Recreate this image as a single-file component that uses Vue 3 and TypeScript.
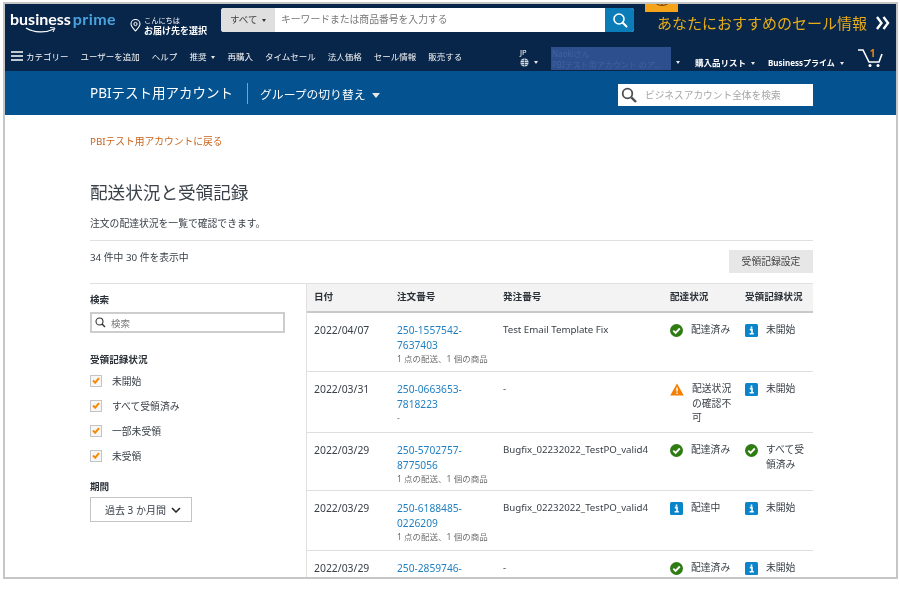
<script setup lang="ts">
interface Status {
  icon: 'ok' | 'info' | 'warn'
  text: string
}
interface Row {
  date: string
  order: string
  note: string
  po: string
  delivery: Status
  receipt: Status
  height: number
}

const navLinks = ['ユーザーを追加', 'ヘルプ', '推奨', '再購入', 'タイムセール', '法人価格', 'セール情報', '販売する']
const filters = ['未開始', 'すべて受領済み', '一部未受領', '未受領']
const noteText = '1 点の配送、1 個の商品'

const rows: Row[] = [
  { date: '2022/04/07', order: '250-1557542-7637403', note: noteText, po: 'Test Email Template Fix', delivery: { icon: 'ok', text: '配達済み' }, receipt: { icon: 'info', text: '未開始' }, height: 59 },
  { date: '2022/03/31', order: '250-0663653-7818223', note: '-', po: '-', delivery: { icon: 'warn', text: '配送状況の確認不可' }, receipt: { icon: 'info', text: '未開始' }, height: 61 },
  { date: '2022/03/29', order: '250-5702757-8775056', note: noteText, po: 'Bugfix_02232022_TestPO_valid4', delivery: { icon: 'ok', text: '配達済み' }, receipt: { icon: 'ok', text: 'すべて受領済み' }, height: 58 },
  { date: '2022/03/29', order: '250-6188485-0226209', note: noteText, po: 'Bugfix_02232022_TestPO_valid4', delivery: { icon: 'info', text: '配達中' }, receipt: { icon: 'info', text: '未開始' }, height: 60 },
  { date: '2022/03/29', order: '250-2859746-1102938', note: noteText, po: '-', delivery: { icon: 'ok', text: '配達済み' }, receipt: { icon: 'info', text: '未開始' }, height: 59 },
]
</script>

<template>
  <div class="frame">
    <header class="topbar">
      <div class="row-one">
        <div class="logo">
          <span class="logo-word"><b>business</b><i>prime</i></span>
          <svg class="logo-smile" width="32" height="7" viewBox="0 0 32 7">
            <path d="M1 1c8 5 20 5 28 1" fill="none" stroke="#fff" stroke-width="1.2" />
            <path d="M25 .5l5 .5-2 4" fill="none" stroke="#fff" stroke-width="1" />
          </svg>
        </div>
        <div class="deliver">
          <svg width="11" height="13" viewBox="0 0 11 13">
            <path d="M5.5 12C3 9 1 7.300 1 5a4.500 4.500 0 0 1 9 0c0 2.300-2 4-4.500 7z" fill="none" stroke="#fff" stroke-width="1.100" />
            <circle cx="5.500" cy="5" r="1.600" fill="none" stroke="#fff" />
          </svg>
          <div>
            <small>こんにちは</small>
            <strong>お届け先を選択</strong>
          </div>
        </div>
        <div class="search">
          <span class="search-cat">すべて <em class="caret dark"></em></span>
          <span class="search-input">キーワードまたは商品番号を入力する</span>
          <span class="search-btn">
            <svg width="16" height="16" viewBox="0 0 16 16">
              <circle cx="7" cy="7" r="5" fill="none" stroke="#fff" stroke-width="1.600" />
              <path d="M10.800 10.800L14.500 14.500" stroke="#fff" stroke-width="2" stroke-linecap="round" />
            </svg>
          </span>
        </div>
        <div class="promo">
          <span class="promo-tab">
            <svg width="14" height="6" viewBox="0 0 14 6">
              <path d="M1 1.500c3 2.500 9 2.500 12 0M7 0v3" fill="none" stroke="#5c3a00" stroke-width="1" />
            </svg>
          </span>
          <span class="promo-text">あなたにおすすめのセール情報</span>
          <svg class="promo-arrows" width="14" height="14" viewBox="0 0 14 14">
            <path d="M1 1l4.500 6L1 13M7.500 1L12 7l-4.500 6" fill="none" stroke="#fff" stroke-width="2.400" />
          </svg>
        </div>
      </div>
      <div class="row-two">
        <nav class="nav-left">
          <span class="cat">
            <svg width="12" height="10" viewBox="0 0 12 10">
              <path d="M0 1h12M0 5h12M0 9h12" stroke="#fff" stroke-width="1.400" />
            </svg>
            カテゴリー
          </span>
          <span v-for="link in navLinks" :key="link" class="nav-link">
            {{ link }}<em v-if="link === '推奨'" class="caret"></em>
          </span>
        </nav>
        <div class="nav-right">
          <div class="lang">
            <span>JP</span>
            <span class="globe">
              <svg width="9" height="9" viewBox="0 0 9 9">
                <circle cx="4.500" cy="4.500" r="4" fill="#d8dde4" />
                <path d="M.5 4.500h8M4.500.5v8M1.300 2.400h6.400M1.300 6.600h6.400" stroke="#08264a" stroke-width=".6" />
              </svg>
              <em class="caret"></em>
            </span>
          </div>
          <div class="account">
            <span>Naokiさん</span>
            <span>PBIテスト用アカウント のア…</span>
          </div>
          <em class="caret account-caret"></em>
          <span class="nav-strong list">購入品リスト<em class="caret"></em></span>
          <span class="nav-strong biz">Businessプライム<em class="caret"></em></span>
          <span class="cart">
            <i>1</i>
            <svg width="26" height="20" viewBox="0 0 26 20">
              <path d="M1 2h5l6 12h10l3-8" fill="none" stroke="#fff" stroke-width="1.600" />
              <circle cx="13" cy="17.500" r="1.500" fill="#fff" />
              <circle cx="21" cy="17.500" r="1.500" fill="#fff" />
            </svg>
          </span>
        </div>
      </div>
    </header>

    <section class="account-bar">
      <div class="account-left">
        <span class="account-name">PBIテスト用アカウント</span>
        <span class="account-switch">グループの切り替え<em class="caret large"></em></span>
      </div>
      <div class="account-search">
        <svg width="16" height="16" viewBox="0 0 16 16">
          <circle cx="6.500" cy="6.500" r="4.800" fill="none" stroke="#4a4f55" stroke-width="1.800" />
          <path d="M10.300 10.300L15 15" stroke="#4a4f55" stroke-width="2.400" />
        </svg>
        <span>ビジネスアカウント全体を検索</span>
      </div>
    </section>

    <main class="content">
      <a class="back">PBIテスト用アカウントに戻る</a>
      <h1>配送状況と受領記録</h1>
      <p class="desc">注文の配達状況を一覧で確認できます。</p>
      <div class="count-bar">
        <span>34 件中 30 件を表示中</span>
        <button class="settings">受領記録設定</button>
      </div>

      <div class="columns">
        <aside class="side">
          <h3>検索</h3>
          <div class="side-search">
            <svg width="11" height="11" viewBox="0 0 11 11">
              <circle cx="4.500" cy="4.500" r="3.500" fill="none" stroke="#333" stroke-width="1.100" />
              <path d="M7 7l3 3" stroke="#333" stroke-width="1.400" />
            </svg>
            <span>検索</span>
          </div>
          <h3 class="status-title">受領記録状況</h3>
          <label v-for="f in filters" :key="f" class="check">
            <span class="box">
              <svg width="8" height="7" viewBox="0 0 8 7">
                <path d="M1 3.500l2.200 2.200L7 1.200" fill="none" stroke="#f58a00" stroke-width="2" />
              </svg>
            </span>
            {{ f }}
          </label>
          <h3 class="period-title">期間</h3>
          <div class="period">
            <span>過去 3 か月間</span>
            <svg width="10" height="6" viewBox="0 0 10 6">
              <path d="M1 1l4 4 4-4" fill="none" stroke="#222" stroke-width="1.500" />
            </svg>
          </div>
        </aside>

        <div class="table">
          <div class="tr head">
            <span>日付</span>
            <span>注文番号</span>
            <span>発注番号</span>
            <span>配達状況</span>
            <span>受領記録状況</span>
          </div>
          <div v-for="row in rows" :key="row.order" class="tr" :style="{ height: row.height + 'px' }">
            <span class="date">{{ row.date }}</span>
            <div class="order">
              <a>{{ row.order }}</a>
              <small>{{ row.note }}</small>
            </div>
            <span class="po">{{ row.po }}</span>
            <div v-for="s in [row.delivery, row.receipt]" :key="s.text" class="status">
              <svg v-if="s.icon === 'ok'" width="13" height="13" viewBox="0 0 13 13">
                <circle cx="6.500" cy="6.500" r="6.500" fill="#2f7d12" />
                <path d="M3.300 6.700l2.300 2.300 4.200-4.500" fill="none" stroke="#fff" stroke-width="1.900" />
              </svg>
              <svg v-else-if="s.icon === 'info'" width="13" height="13" viewBox="0 0 13 13">
                <rect width="13" height="13" rx="1.500" fill="#0a85cc" />
                <path d="M4.800 5.600h2.200v4M4.600 9.800h4.200M6.500 2.500v1.900" fill="none" stroke="#fff" stroke-width="1.600" />
              </svg>
              <svg v-else width="14" height="13" viewBox="0 0 14 13">
                <path d="M7 0.500l6.800 12H0.200z" fill="#f47f00" />
                <path d="M7 4.500v4M7 9.500v1.500" stroke="#fff" stroke-width="1.400" />
              </svg>
              <span>{{ s.text }}</span>
            </div>
          </div>
        </div>
      </div>
    </main>
  </div>
</template>

<style scoped>
.frame {
  box-sizing: border-box;
  width: 895px;
  height: 577px;
  margin: 2px 0 0 3px;
  border: 2px solid #c6c6c6;
  overflow: hidden;
  background: #fff;
  color: #3a4149;
  font-family: "Noto Sans", "Noto Sans CJK JP", sans-serif;
  font-size: 10px;
  filter: blur(0.3px);
}
em,
i {
  font-style: normal;
}
.caret {
  display: inline-block;
  margin-left: 5px;
  border-left: 2.5px solid transparent;
  border-right: 2.5px solid transparent;
  border-top: 3px solid #e8e8e8;
  vertical-align: middle;
}
.caret.dark {
  border-top-color: #333;
}
.caret.large {
  margin-left: 6px;
  border-left-width: 4px;
  border-right-width: 4px;
  border-top-width: 5px;
}

/* top nav */
.topbar {
  background: #08264a;
  color: #fff;
  height: 67px;
}
.row-one {
  display: flex;
  height: 40px;
  padding-left: 5px;
}
.logo {
  width: 120px;
  padding-top: 5px;
}
.logo-word {
  display: block;
  font-family: Lato, sans-serif;
  font-size: 16px;
  line-height: 20px;
  white-space: nowrap;
}
.logo-word i {
  margin-left: 2px;
  color: #4aa2dc;
  font-weight: 700;
  letter-spacing: 0.4px;
}
.logo-smile {
  display: block;
  margin: -2px 0 0 15px;
}
.deliver {
  display: flex;
  align-items: center;
  gap: 3px;
  width: 91px;
  height: 28px;
  margin-top: 7px;
}
.deliver small {
  display: block;
  font-size: 7.200px;
  line-height: 10px;
}
.deliver strong {
  display: block;
  font-size: 9px;
  line-height: 11px;
}
.search {
  display: flex;
  width: 413px;
  height: 24px;
  margin-top: 4px;
  border-radius: 3px;
  overflow: hidden;
  background: #fff;
}
.search-cat {
  width: 54px;
  background: #dfdfdf;
  color: #444;
  font-size: 9.500px;
  line-height: 24px;
  text-align: center;
}
.search-cat .caret {
  margin-left: 2px;
}
.search-input {
  flex: 1;
  padding-left: 6px;
  color: #777;
  font-size: 9.800px;
  line-height: 24px;
}
.search-btn {
  display: flex;
  align-items: center;
  justify-content: center;
  width: 29px;
  background: #0a7db8;
}
.promo {
  position: relative;
  display: flex;
  align-items: center;
  margin-left: 23px;
  padding-bottom: 3px;
}
.promo-tab {
  position: absolute;
  top: -2px;
  left: -12px;
  display: flex;
  justify-content: center;
  width: 33px;
  height: 10px;
  background: #f5a31a;
}
.promo-text {
  color: #e8ac16;
  font-size: 15px;
  white-space: nowrap;
}
.promo-arrows {
  margin-left: 9px;
}
.row-two {
  display: flex;
  justify-content: space-between;
  height: 27px;
}
.nav-left {
  display: flex;
  align-items: center;
  gap: 12px;
  padding: 0 0 4px 6px;
  font-size: 8.500px;
  color: #f4f4f4;
}
.cat {
  display: flex;
  align-items: center;
  gap: 3px;
}
.nav-right {
  display: flex;
  box-sizing: border-box;
  width: 386px;
  align-items: flex-end;
  padding-bottom: 1px;
  font-size: 8.500px;
}
.lang {
  display: flex;
  flex-direction: column;
  width: 31px;
  margin-left: 10px;
  font-size: 7.500px;
  line-height: 11px;
  padding-bottom: 3px;
}
.globe {
  display: flex;
  align-items: center;
}
.account {
  display: flex;
  flex-direction: column;
  justify-content: center;
  box-sizing: border-box;
  width: 120px;
  height: 23px;
  padding-left: 1px;
  background: #2d4f8e;
  color: #41639f;
  font-size: 8px;
  line-height: 11px;
  flex: none;
}
.account-caret {
  margin: 0 0 6px 5px;
}
.nav-strong {
  font-weight: 700;
  padding-bottom: 2px;
  white-space: nowrap;
}
.list {
  margin-left: 15px;
}
.biz {
  margin-left: 13px;
  font-size: 8px;
}
.cart {
  position: relative;
  margin-left: 13px;
  padding-bottom: 2px;
}
.cart i {
  position: absolute;
  top: -1px;
  left: 13px;
  color: #f08804;
  font-size: 10px;
  font-weight: 700;
  line-height: 12px;
}
.cart svg {
  display: block;
}

/* account bar */
.account-bar {
  display: flex;
  align-items: center;
  justify-content: space-between;
  height: 44px;
  padding: 0 83px 0 85px;
  background: #04528f;
  color: #fff;
}
.account-left {
  display: flex;
  align-items: center;
}
.account-name {
  padding-right: 14px;
  border-right: 1px solid #7ca3c4;
  font-size: 13.500px;
  line-height: 21px;
}
.account-switch {
  margin-left: 12px;
  font-size: 11.800px;
}
.account-search {
  display: flex;
  align-items: center;
  gap: 8px;
  box-sizing: border-box;
  width: 195px;
  height: 22px;
  margin-top: 3px;
  padding-left: 3px;
  background: #fff;
  color: #a6a6a6;
  font-size: 9.700px;
}

/* body */
.content {
  padding: 0 83px 0 85px;
}
.back {
  display: block;
  padding-top: 20px;
  color: #c7641c;
  font-size: 9.750px;
  line-height: 14px;
}
h1 {
  margin: 31px 0 0;
  font-size: 17.600px;
  font-weight: 400;
  line-height: 24px;
  color: #3a4149;
}
.desc {
  margin: 13px 0 0;
  font-size: 9.800px;
  line-height: 14px;
}
.count-bar {
  display: flex;
  align-items: flex-start;
  justify-content: space-between;
  margin-top: 9px;
  height: 43px;
  box-sizing: border-box;
  border-top: 1px solid #e0e0e0;
  padding-top: 9px;
  line-height: 16px;
  font-size: 9.800px;
}
.settings {
  width: 84px;
  height: 23px;
  border: 0;
  background: #e7e7e7;
  color: #444;
  font: inherit;
}
.columns {
  display: flex;
  border-top: 1px solid #e0e0e0;
}
.side {
  box-sizing: border-box;
  width: 217px;
  border-right: 1px solid #e0e0e0;
  height: 300px;
  flex: none;
}
h3 {
  margin: 0;
  color: #2b3138;
  font-size: 9.600px;
  font-weight: 700;
  line-height: 14px;
}
.side > h3:first-child {
  margin-top: 9px;
}
.side-search {
  display: flex;
  align-items: center;
  gap: 5px;
  box-sizing: border-box;
  width: 195px;
  height: 21px;
  margin-top: 5px;
  padding-left: 3px;
  border: 2px solid #cdcdcd;
  color: #777;
  font-size: 9.500px;
}
.status-title {
  margin-top: 20px;
}
.check {
  display: flex;
  align-items: center;
  gap: 10px;
  height: 25px;
  font-size: 9.800px;
}
.status-title + .check {
  margin-top: 1px;
}
.box {
  display: flex;
  align-items: center;
  justify-content: center;
  box-sizing: border-box;
  width: 12px;
  height: 12px;
  border: 1px solid #c4c4c4;
  background: #f6f6f6;
}
.period-title {
  margin-top: 12px;
}
.period {
  display: flex;
  align-items: center;
  justify-content: space-between;
  box-sizing: border-box;
  width: 102px;
  height: 25px;
  margin-top: 3px;
  padding: 0 10px 0 14px;
  border: 1.500px solid #c4c4c4;
  font-size: 10px;
}
.table {
  flex: 1;
}
.tr {
  display: grid;
  grid-template-columns: 83px 106px 167px 75px 1fr;
  box-sizing: border-box;
  padding: 10px 0 0 7px;
  border-bottom: 1px solid #dedede;
  font-size: 10.200px;
  line-height: 14.500px;
}
.tr.head {
  height: 29px;
  padding-top: 6px;
  background: #f3f3f3;
  border-bottom: 2px solid #c9c9c9;
  color: #2b3138;
  font-size: 9.600px;
  font-weight: 700;
}
.date {
  font-size: 10.400px;
}
.po {
  font-size: 9.700px;
}
.order a {
  display: block;
  width: 76px;
  color: #1f7fc0;
}
.order small {
  display: block;
  color: #6f6f6f;
  font-size: 8.500px;
}
.status {
  display: flex;
  gap: 8px;
  font-size: 9.800px;
}
.status svg {
  flex: none;
  margin-top: 1px;
}
.status span {
  width: 41px;
}
</style>

<style>
html,
body {
  background: #fff;
}
</style>
